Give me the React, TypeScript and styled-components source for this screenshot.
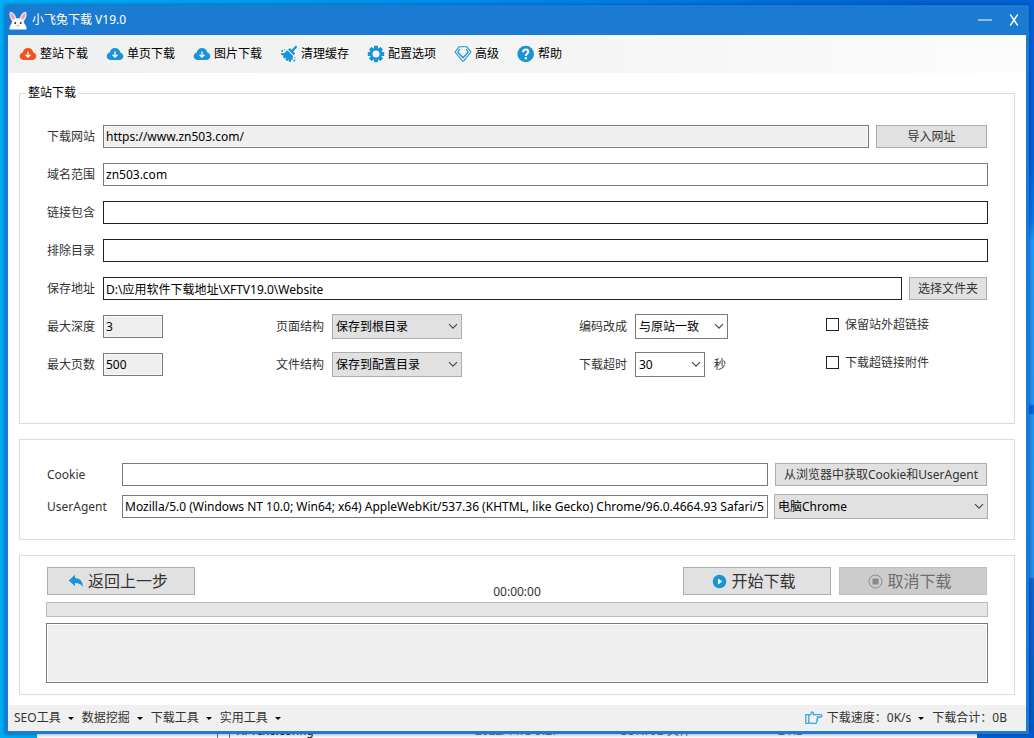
import React from "react";
import styled, { createGlobalStyle, css } from "styled-components";

const GlobalStyle = createGlobalStyle`
  * { box-sizing: border-box; }
  body { margin: 0; }
  body, button, input, select, textarea {
    font-family: "Noto Sans", "Noto Sans CJK SC", sans-serif;
    font-size: 12px;
    line-height: 16px;
    color: #333;
  }
`;

const BLUE = "#1b7ad2";
const ICON_BLUE = "#1a94d6";

const Desktop = styled.div`
  position: relative;
  min-height: 100vh;
  padding: 5px 5px 4px;
  overflow: hidden;
  background:
    linear-gradient(#0062d6 0, #0062d6 160px, #0a78e6 220px, #1a9cff 242px, #1e96f8 404px, #0068dc 406px, #0068dc 413px, #1e96f8 415px, #2090f6 577px, #0868d8 579px, #0058c8 100%) right / 5px 100% no-repeat,
    linear-gradient(90deg, #00aef6, #0092ee 40%, #0062d6 90%);
`;

const Backdrop = styled.div`
  position: absolute;
  left: 37px;
  right: 57px;
  bottom: 0;
  height: 16px;
  padding-left: 180px;
  display: grid;
  grid-template-columns: 258px 144px 159px 1fr;
  align-items: start;
  line-height: 18px;
  background: #fff;
  color: #777;
`;

const FileName = styled.span`
  display: flex;
  align-items: center;
  gap: 7px;
  color: #222;
  &::before {
    content: "";
    width: 11px;
    height: 13px;
    border: 1px solid #777;
  }
`;

const Window = styled.div`
  position: relative;
  border: 0 solid ${BLUE};
  border-width: 0 3px 3px;
  border-radius: 3px 3px 0 0;
  background: #fff;
  box-shadow: 0 0 4px rgba(0, 30, 90, 0.55);
`;

const TitleBar = styled.header`
  display: flex;
  align-items: center;
  height: 30px;
  margin: 0 -3px;
  padding: 0 3px 0 4px;
  gap: 5px;
  border-radius: 3px 3px 0 0;
  background: ${BLUE};
  color: #fff;
`;

const Title = styled.h1`
  flex: 1;
  margin: 0;
  font-size: 12px;
  font-weight: 400;
`;

const CaptionButton = styled.button`
  display: flex;
  align-items: center;
  justify-content: center;
  width: 24px;
  height: 24px;
  padding: 0;
  border: 0;
  background: none;
`;

const Toolbar = styled.nav`
  display: flex;
  align-items: center;
  gap: 18px;
  height: 38px;
  padding: 0 11px;
  background: linear-gradient(90deg, #f0f0f0, #f5f5f5 55%, #fcfcfc);
`;

const ToolButton = styled.button`
  display: flex;
  align-items: center;
  gap: 3px;
  padding: 0;
  border: 0;
  background: none;
  color: #000;
  white-space: nowrap;
`;

const Main = styled.main`
  display: flex;
  flex-direction: column;
  gap: 15px;
  padding: 12px 11px 10px;
`;

const panel = css`
  border: 1px solid #dcdcdc;
  margin: 0;
  min-width: 0;
`;

const SiteGroup = styled.fieldset`
  ${panel}
  padding: 23px 26px 46px 27px;
`;

const Legend = styled.legend`
  margin-left: -21px;
  padding: 0 2px;
  line-height: 16px;
  color: #000;
`;

const Stack = styled.div<{ $gap: number }>`
  display: flex;
  flex-direction: column;
  gap: ${(p) => p.$gap}px;
`;

const AgentGroup = styled.section`
  ${panel}
  padding: 22px 26px 20px 27px;
`;

const RunGroup = styled.section`
  ${panel}
  padding: 11px 26px 11px;
`;

const Row = styled.div`
  display: flex;
  align-items: center;
  height: 25px;
`;

const OptionsGrid = styled.div`
  display: grid;
  grid-template-columns: 229fr 303fr 247fr 162fr;
  row-gap: 13px;
`;

const Label = styled.label<{ $wide?: boolean }>`
  flex: none;
  width: ${(p) => (p.$wide ? 75 : 56)}px;
  white-space: nowrap;
`;

const TextInput = styled.input<{ $short?: boolean; $strong?: boolean }>`
  flex: ${(p) => (p.$short ? "none" : "1")};
  width: ${(p) => (p.$short ? "60px" : "auto")};
  min-width: 0;
  height: 23px;
  padding: 0 2px;
  border: 1px solid ${(p) => (p.$strong ? "#222" : "#7a7a7a")};
  border-radius: 0;
  background: #fff;
  color: #000;
  outline: none;
  &:read-only {
    background: #efefef;
    box-shadow: inset 0 0 0 1px #f8f8f8;
  }
`;

const PushButton = styled.button<{ $width: number }>`
  flex: none;
  width: ${(p) => p.$width}px;
  height: 23px;
  margin: 0 1px 0 7px;
  padding: 0;
  border: 1px solid #adadad;
  background: #e1e1e1;
  white-space: nowrap;
`;

const SelectBox = styled.span<{ $width: number }>`
  position: relative;
  flex: none;
  display: flex;
  width: ${(p) => p.$width}px;
  svg {
    position: absolute;
    right: 4px;
    top: 9px;
    pointer-events: none;
  }
`;

const NativeSelect = styled.select<{ $light?: boolean }>`
  appearance: none;
  width: 100%;
  height: 25px;
  padding: 0 18px 0 3px;
  border: 1px solid ${(p) => (p.$light ? "#7a7a7a" : "#adadad")};
  border-radius: 0;
  background: ${(p) => (p.$light ? "#fff" : "#e1e1e1")};
  color: #000;
`;

const Unit = styled.span`
  margin-left: 9px;
`;

const AgentTool = styled.span`
  display: flex;
  margin-left: 6px;
`;

const CheckLabel = styled.label`
  display: flex;
  align-items: center;
  gap: 6px;
  padding-bottom: 4px;
  white-space: nowrap;
`;

const CheckBox = styled.input`
  appearance: none;
  width: 13px;
  height: 13px;
  margin: 0;
  border: 1px solid #222;
  background: #fff;
  &:checked { background: ${ICON_BLUE}; }
`;

const RunBar = styled.div`
  display: grid;
  grid-template-columns: 1fr auto 1fr;
  height: 32px;
  margin-bottom: 3px;
`;

const RunActions = styled.div<{ $end?: boolean }>`
  display: flex;
  gap: 8px;
  justify-content: ${(p) => (p.$end ? "flex-end" : "flex-start")};
  padding: 0 1px;
`;

const BigButton = styled.button`
  display: flex;
  align-items: center;
  justify-content: center;
  gap: 4px;
  width: 148px;
  height: 28px;
  padding: 0 6px 0 0;
  border: 1px solid #adadad;
  background: #e1e1e1;
  font-size: 16px;
  &:disabled {
    border-color: #bfbfbf;
    background: #ccc;
    color: #6d6d6d;
  }
`;

const Elapsed = styled.time`
  align-self: end;
  line-height: 14px;
`;

const Progress = styled.div`
  height: 15px;
  margin-bottom: 6px;
  border: 1px solid #bcbcbc;
  background: #e6e6e6;
`;

const Log = styled.textarea`
  display: block;
  width: 100%;
  height: 60px;
  padding: 2px;
  resize: none;
  border: 1px solid #7a7a7a;
  border-radius: 0;
  background: #efefef;
  box-shadow: inset 0 0 0 1px #fff;
  outline: none;
`;

const StatusBar = styled.footer`
  display: flex;
  align-items: center;
  gap: 8px;
  height: 26px;
  padding: 0 19px 0 6px;
  background: #f0f0f0;
`;

const StatusMenu = styled.button<{ $end?: boolean }>`
  display: flex;
  align-items: center;
  margin-left: ${(p) => (p.$end ? "auto" : "0")};
  padding: 0;
  border: 0;
  background: none;
  white-space: nowrap;
  &::after {
    content: "";
    margin-left: 7px;
    border: solid transparent;
    border-width: 3px 3px 0;
    border-top-color: #000;
  }
  svg { margin-right: 4px; }
`;

const Chevron = () => (
  <svg width="10" height="7" viewBox="0 0 10 7" fill="none" stroke="#444" strokeWidth="1.1">
    <path d="M1 1.2 5 5.2 9 1.2" />
  </svg>
);

const Rabbit = () => (
  <svg width="18" height="19" viewBox="0 0 18 19">
    <path d="M1.2.8C-.4 2.6.8 8 3.500 10.500l3.800-2C7.200 4.500 3.700.2 1.200.8z" fill="#f6e6ee" />
    <path d="M16.800.8c1.600 1.800.4 7.200-2.300 9.700l-3.800-2C10.800 4.500 14.300.2 16.800.8z" fill="#f6e6ee" />
    <path d="M1.800 1.800c-.7 1.900.5 5.600 2.500 7L6 7.800C5.300 5 3.500 2.300 1.800 1.800zM16.200 1.800c.7 1.900-.5 5.600-2.500 7L12 7.800c.7-2.800 2.500-5.500 4.200-6z" fill="#e3a0bc" />
    <path d="M9 7.300c-4 0-6.300 2.700-6.400 5.500C1 14.500.3 16.500.5 18.500h17c.2-2-.5-4-2.100-5.700C15.300 10 13 7.300 9 7.300z" fill="#fff" />
    <circle cx="6.200" cy="12" r=".9" fill="#222" />
    <circle cx="11.800" cy="12" r=".9" fill="#222" />
    <path d="M7.800 14h2.400L9 15.600z" fill="#e8604c" />
  </svg>
);

const Cloud = ({ color = ICON_BLUE }: { color?: string }) => (
  <svg width="18" height="18" viewBox="0 0 18 18">
    <path d="M4.800 15C2.300 15 .7 13.300.7 11.300c0-1.900 1.300-3.300 3-3.700C4.100 4.900 6.300 3.100 9 3.100s4.900 1.800 5.300 4.500c1.700.4 3 1.800 3 3.700 0 2-1.600 3.700-4.100 3.700z" fill={color} />
    <path d="M9 6.600v5.400M6.600 9.800 9 12.200 11.400 9.800" fill="none" stroke="#fff" strokeWidth="1.300" />
  </svg>
);

const Broom = () => (
  <svg width="18" height="18" viewBox="0 0 18 18" fill={ICON_BLUE}>
    <path d="M15.800.6 17.300 2 12.600 7.300 10.900 5.600z" />
    <path d="M9 3.700c.5-.5 1.100-.5 1.600 0l4 4c.5.500.5 1.100 0 1.600l-.9.900-5.600-5.600z" />
    <path d="M7.400 5.300 13 10.900 12.300 15.600 11 14.800 10.800 17.200 8.800 16.400 8.500 14.200 7.300 16.300 5.400 14.800 6.200 12.400 4.300 13.600 2.800 12 4 10.400 1.800 10.600.8 8.300 4.500 8z" />
    <circle cx="2.200" cy="6" r="1.100" />
    <circle cx="14.300" cy="15.600" r="1" />
    <circle cx="4.500" cy="4.300" r=".6" />
    <circle cx="15" cy="12.600" r=".6" />
  </svg>
);

const Gear = () => (
  <svg width="18" height="18" viewBox="0 0 18 18">
    <g fill={ICON_BLUE}>
      {[0, 45, 90, 135].map((a) => (
        <rect key={a} x="7" y=".8" width="4" height="16.400" rx=".6" transform={`rotate(${a} 9 9)`} />
      ))}
      <circle cx="9" cy="9" r="6.200" />
    </g>
    <circle cx="9" cy="9" r="3.500" fill="#f3f3f3" />
  </svg>
);

const Diamond = () => (
  <svg width="18" height="18" viewBox="0 0 18 18" fill="none" stroke={ICON_BLUE} strokeWidth="1.100" strokeLinejoin="round">
    <path d="M5 1.800h8L17 7 9.700 15.900Q9 16.600 8.300 15.900L1 7z" />
    <path d="M5.800 4 3.700 7 9 12.700 14.300 7 12.200 4" strokeWidth="1.300" />
  </svg>
);

const Help = () => (
  <svg width="18" height="18" viewBox="0 0 18 18">
    <circle cx="8.700" cy="9" r="8.300" fill={ICON_BLUE} />
    <path d="M6.100 7.200C6.100 5.500 7.200 4.500 8.700 4.500s2.600 1 2.600 2.400c0 1.900-2.500 2-2.500 4" fill="none" stroke="#fff" strokeWidth="1.900" />
    <circle cx="8.800" cy="13.200" r="1.200" fill="#fff" />
  </svg>
);

const BackArrow = () => (
  <svg width="16" height="14" viewBox="0 0 16 14">
    <path d="M7 .8v3.100c5 .2 8 3.200 7.800 9.300C13.200 10.200 11 9 7 9v3.200L.8 6.400z" fill={ICON_BLUE} />
  </svg>
);

const Play = () => (
  <svg width="15" height="15" viewBox="0 0 15 15">
    <circle cx="7.500" cy="7.500" r="6.800" fill={ICON_BLUE} />
    <path d="M6 4.500 10.300 7.500 6 10.500z" fill="#fff" />
  </svg>
);

const Stop = () => (
  <svg width="15" height="15" viewBox="0 0 15 15">
    <circle cx="7.500" cy="7.500" r="6.500" fill="none" stroke="#8f8f8f" />
    <rect x="4.500" y="4.500" width="6" height="6" rx=".6" fill="#8a8a8a" />
  </svg>
);

const Hand = () => (
  <svg width="18" height="14" viewBox="0 0 18 14" fill="none" stroke="#3aa6dc" strokeWidth="1.300" strokeLinejoin="round">
    <path d="M.8 3.700h3v8.600h-3zM3.800 4.700C5.500 4.300 6 3 6.400 1.800 6.800.6 8.600.8 8.500 2.300L8.200 3.700h7.600c1.500 0 1.500 2.300 0 2.300H11.600M12 6.100c1.200.3 1 2-.2 2.100 1 .3.800 1.900-.4 2 .7.500.4 2.100-.9 2.100H6.500L3.800 11.700" />
  </svg>
);

const tools = [
  { label: "整站下载", icon: <Cloud color="#f4511e" /> },
  { label: "单页下载", icon: <Cloud /> },
  { label: "图片下载", icon: <Cloud /> },
  { label: "清理缓存", icon: <Broom /> },
  { label: "配置选项", icon: <Gear /> },
  { label: "高级", icon: <Diamond /> },
  { label: "帮助", icon: <Help /> },
];

type SelectProps = { id: string; width: number; value: string; light?: boolean; label?: string };

const Select = ({ id, width, value, light, label }: SelectProps) => (
  <SelectBox $width={width}>
    <NativeSelect id={id} $light={light} aria-label={label}>
      <option>{value}</option>
    </NativeSelect>
    <Chevron />
  </SelectBox>
);

export default function App() {
  return (
    <Desktop>
      <GlobalStyle />
      <Backdrop aria-hidden="true">
        <FileName>XFTexe.config</FileName>
        <span>2022/11/3 9:27</span>
        <span>CONFIG 文件</span>
        <span>2 KB</span>
      </Backdrop>
      <Window>
        <TitleBar>
          <Rabbit />
          <Title>小飞兔下载 V19.0</Title>
          <CaptionButton aria-label="最小化">
            <svg width="14" height="2" viewBox="0 0 14 2"><path d="M0 1h14" stroke="#fff" /></svg>
          </CaptionButton>
          <CaptionButton aria-label="关闭">
            <svg width="10" height="12" viewBox="0 0 10 12" fill="none" stroke="#fff" strokeWidth="1.400"><path d="M1.200.5 8.800 11.500M8.800.5 1.200 11.500" /></svg>
          </CaptionButton>
        </TitleBar>

        <Toolbar>
          {tools.map((t) => (
            <ToolButton key={t.label}>
              {t.icon}
              {t.label}
            </ToolButton>
          ))}
        </Toolbar>

        <Main>
          <SiteGroup>
            <Legend>整站下载</Legend>
            <Stack $gap={13}>
              <Row>
                <Label htmlFor="url">下载网站</Label>
                <TextInput id="url" readOnly defaultValue="https://www.zn503.com/" />
                <PushButton $width={111}>导入网址</PushButton>
              </Row>
              <Row>
                <Label htmlFor="domain">域名范围</Label>
                <TextInput id="domain" defaultValue="zn503.com" />
              </Row>
              <Row>
                <Label htmlFor="include">链接包含</Label>
                <TextInput id="include" $strong />
              </Row>
              <Row>
                <Label htmlFor="exclude">排除目录</Label>
                <TextInput id="exclude" $strong />
              </Row>
              <Row>
                <Label htmlFor="folder">保存地址</Label>
                <TextInput id="folder" $strong defaultValue="D:\应用软件下载地址\XFTV19.0\Website" />
                <PushButton $width={78}>选择文件夹</PushButton>
              </Row>
              <OptionsGrid>
                <Row>
                  <Label htmlFor="depth">最大深度</Label>
                  <TextInput id="depth" $short readOnly defaultValue="3" />
                </Row>
                <Row>
                  <Label htmlFor="page">页面结构</Label>
                  <Select id="page" width={130} value="保存到根目录" />
                </Row>
                <Row>
                  <Label htmlFor="encoding">编码改成</Label>
                  <Select id="encoding" width={93} value="与原站一致" light />
                </Row>
                <CheckLabel>
                  <CheckBox type="checkbox" />
                  保留站外超链接
                </CheckLabel>
                <Row>
                  <Label htmlFor="pages">最大页数</Label>
                  <TextInput id="pages" $short readOnly defaultValue="500" />
                </Row>
                <Row>
                  <Label htmlFor="file">文件结构</Label>
                  <Select id="file" width={130} value="保存到配置目录" />
                </Row>
                <Row>
                  <Label htmlFor="timeout">下载超时</Label>
                  <Select id="timeout" width={70} value="30" light />
                  <Unit>秒</Unit>
                </Row>
                <CheckLabel>
                  <CheckBox type="checkbox" />
                  下载超链接附件
                </CheckLabel>
              </OptionsGrid>
            </Stack>
          </SiteGroup>

          <AgentGroup>
            <Stack $gap={7}>
              <Row>
                <Label $wide htmlFor="cookie">Cookie</Label>
                <TextInput id="cookie" />
                <PushButton $width={212}>从浏览器中获取Cookie和UserAgent</PushButton>
              </Row>
              <Row>
                <Label $wide htmlFor="agent">UserAgent</Label>
                <TextInput
                  id="agent"
                  defaultValue="Mozilla/5.0 (Windows NT 10.0; Win64; x64) AppleWebKit/537.36 (KHTML, like Gecko) Chrome/96.0.4664.93 Safari/537.36"
                />
                <AgentTool>
                  <Select id="browser" width={214} value="电脑Chrome" label="浏览器" />
                </AgentTool>
              </Row>
            </Stack>
          </AgentGroup>

          <RunGroup>
            <RunBar>
              <RunActions>
                <BigButton><BackArrow />返回上一步</BigButton>
              </RunActions>
              <Elapsed>00:00:00</Elapsed>
              <RunActions $end>
                <BigButton><Play />开始下载</BigButton>
                <BigButton disabled><Stop />取消下载</BigButton>
              </RunActions>
            </RunBar>
            <Progress role="progressbar" aria-label="下载进度" aria-valuenow={0} />
            <Log readOnly aria-label="下载日志" />
          </RunGroup>
        </Main>

        <StatusBar>
          <StatusMenu>SEO工具</StatusMenu>
          <StatusMenu>数据挖掘</StatusMenu>
          <StatusMenu>下载工具</StatusMenu>
          <StatusMenu>实用工具</StatusMenu>
          <StatusMenu $end><Hand />下载速度：0K/s</StatusMenu>
          <span>下载合计：0B</span>
        </StatusBar>
      </Window>
    </Desktop>
  );
}
